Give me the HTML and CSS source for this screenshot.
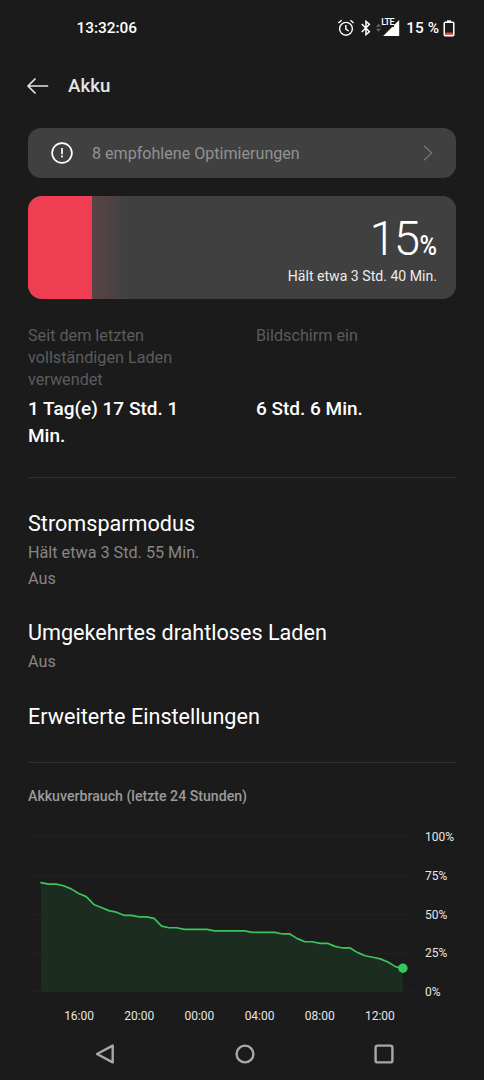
FILE: index.html
```html
<!DOCTYPE html>
<html lang="de">
<head>
    <meta charset="UTF-8">
    <meta name="viewport" content="width=device-width, initial-scale=1.0">
    <title>Akku</title>
    <link rel="stylesheet" href="styles.css">
</head>
<body>
    <div class="status-bar">
        <span class="clock">13:32:06</span>
        <div class="status-icons">
            <svg class="icon-alarm" width="18" height="18" viewBox="0 0 18 18" fill="none" stroke="#fff" stroke-width="1.4">
                <circle cx="9" cy="9.8" r="6.4"/>
                <path d="M8.8 6v4.2l2.9 1.8M1.4 4l3.2-2.7M16.6 4l-3.2-2.7"/>
            </svg>
            <svg class="icon-bluetooth" width="10" height="16" viewBox="0 0 10 16" fill="none" stroke="#fff" stroke-width="1.5">
                <path d="M.8 4l7.6 7.7L5 14.6V1.4l3.4 2.9L.8 12"/>
            </svg>
            <div class="signal">
                <svg width="24" height="18" viewBox="0 0 24 18">
                    <path d="M0 7.8L2.5 4.8 5 7.8zM0 9.8h5l-2.5 3z" fill="#666"/>
                    <path d="M23.2 1v16H7.2z" fill="#fff"/>
                </svg>
                <span class="lte">LTE</span>
            </div>
            <span class="status-percent">15 %</span>
            <svg class="icon-battery" width="12" height="17" viewBox="0 0 12 17">
                <path d="M4 .3h4v2H4z" fill="#fff"/>
                <rect x="1.25" y="2.25" width="9.5" height="13.5" rx="1" fill="none" stroke="#fff" stroke-width="1.5"/>
                <path d="M2.2 12.6h7.6v2.4H2.2z" fill="#e0573f"/>
            </svg>
        </div>
    </div>

    <header class="app-bar">
        <svg width="22" height="16" viewBox="0 0 22 16" fill="none" stroke="#e4e4e4" stroke-width="1.7" stroke-linecap="round" stroke-linejoin="round">
            <path d="M20.5 8H1M8 1L1 8l7 7"/>
        </svg>
        <h1>Akku</h1>
    </header>

    <main>
        <div class="tips">
            <svg width="22" height="22" viewBox="0 0 22 22" fill="none" stroke="#fff" stroke-width="1.7">
                <circle cx="11" cy="11" r="9.9"/>
                <path d="M11 6v6.2M11 13.6v2"/>
            </svg>
            <span>8 empfohlene Optimierungen</span>
            <svg class="chevron" width="10" height="16" viewBox="0 0 10 16" fill="none" stroke="#707070" stroke-width="1.5">
                <path d="M1 .7L8.6 8 1 15.3"/>
            </svg>
        </div>

        <div class="battery">
            <div class="battery-fill" style="width: 15%"></div>
            <div class="battery-info">
                <div class="level">15<span>%</span></div>
                <div class="remaining">Hält etwa 3 Std. 40 Min.</div>
            </div>
        </div>

        <div class="stats">
            <div class="stat">
                <div class="stat-label">Seit dem letzten vollständigen Laden verwendet</div>
                <div class="stat-value">1 Tag(e) 17 Std. 1 Min.</div>
            </div>
            <div class="stat">
                <div class="stat-label">Bildschirm ein</div>
                <div class="stat-value">6 Std. 6 Min.</div>
            </div>
        </div>

        <div class="options">
            <div class="option">
                <h2>Stromsparmodus</h2>
                <p>Hält etwa 3 Std. 55 Min.</p>
                <p>Aus</p>
            </div>
            <div class="option">
                <h2>Umgekehrtes drahtloses Laden</h2>
                <p>Aus</p>
            </div>
            <div class="option">
                <h2>Erweiterte Einstellungen</h2>
            </div>
        </div>

        <section class="usage">
            <h3>Akkuverbrauch (letzte 24 Stunden)</h3>
            <div class="chart">
                <svg id="plot" width="388" height="164" viewBox="0 0 388 164">
                    <path class="grid-lines" d="M0 4.5h386M0 43.5h386M0 82.5h386M0 121.5h386M0 159.5h386"/>
                    <polygon id="area" class="area"/>
                    <polyline id="line" class="line"/>
                    <circle id="dot" class="dot" r="4.7"/>
                </svg>
                <div class="y-axis">
                    <span>100%</span>
                    <span>75%</span>
                    <span>50%</span>
                    <span>25%</span>
                    <span>0%</span>
                </div>
            </div>
            <div class="x-axis">
                <span>16:00</span>
                <span>20:00</span>
                <span>00:00</span>
                <span>04:00</span>
                <span>08:00</span>
                <span>12:00</span>
            </div>
        </section>
    </main>

    <nav class="nav-bar">
        <svg width="20" height="20" viewBox="0 0 20 20"><path d="M17.7 1.6v16.8L2 10z"/></svg>
        <svg width="20" height="20" viewBox="0 0 20 20"><circle cx="10" cy="10" r="8.4"/></svg>
        <svg width="20" height="20" viewBox="0 0 20 20"><rect x="1.6" y="1.6" width="16.8" height="16.8" rx="2"/></svg>
    </nav>

    <script>
        // Battery level, one value per half hour
        const levels = [
            70, 69, 69, 68, 66, 63, 61, 56, 54, 52, 51, 49, 49, 48, 48, 47, 42,
            41, 41, 40, 40, 40, 40, 39, 39, 39, 39, 39, 38, 38, 38, 38, 37, 37,
            34, 32, 32, 31, 31, 29, 28, 28, 25, 23, 22, 21, 19, 16, 15
        ];
        const left = 13;
        const step = 7.54;
        const bottom = 159.5;

        const points = levels.map((level, i) => [left + i * step, bottom - level * 1.555]);
        const last = points[points.length - 1];
        const line = points.map(p => p.join(',')).join(' ');

        document.getElementById('line').setAttribute('points', line);
        document.getElementById('area').setAttribute('points', `${left},${bottom} ${line} ${last[0]},${bottom}`);
        document.getElementById('dot').setAttribute('cx', last[0]);
        document.getElementById('dot').setAttribute('cy', last[1]);
    </script>
</body>
</html>
```
FILE: styles.css
```css
* {
    margin: 0;
    padding: 0;
    box-sizing: border-box;
}

body {
    height: 1080px;
    background: #1b1b1b;
    color: #fff;
    font-family: Roboto, sans-serif;
    overflow: hidden;
    display: flex;
    flex-direction: column;
}

svg {
    display: block;
    flex-shrink: 0;
}

.status-bar {
    height: 56px;
    padding: 0 29px 0 76.5px;
    display: flex;
    align-items: center;
    justify-content: space-between;
    font-size: 15.4px;
    font-weight: 500;
}

.status-icons {
    display: flex;
    align-items: center;
}

.icon-bluetooth {
    margin-left: 6px;
}

.signal {
    position: relative;
    margin-left: 5px;
}

.lte {
    position: absolute;
    left: 5px;
    top: -1px;
    font-size: 9px;
    line-height: 9px;
    letter-spacing: -0.5px;
    background: #1b1b1b;
}

.status-percent {
    margin-left: 6px;
}

.icon-battery {
    margin-left: 4px;
}

.app-bar {
    height: 60px;
    padding-left: 27px;
    display: flex;
    align-items: center;
    gap: 19px;
}

h1 {
    font-size: 18.7px;
    font-weight: 500;
    color: #e4e4e4;
}

main {
    flex: 1;
    padding: 11.5px 28px 0;
}

.tips {
    height: 50.5px;
    padding: 0 23px 0 23px;
    border-radius: 13px;
    background: #404040;
    display: flex;
    align-items: center;
    font-size: 16.1px;
    color: #929292;
}

.tips span {
    margin: 1px 0 0 19px;
}

.chevron {
    margin-left: auto;
}

.battery {
    height: 103px;
    margin-top: 18px;
    border-radius: 14px;
    background: #404040;
    overflow: hidden;
    display: flex;
}

.battery-fill {
    background: #ef3e52;
}

.battery-info {
    flex: 1;
    padding: 19px 19px 0 0;
    background: linear-gradient(to right, #594446, #404040 38px);
    text-align: right;
}

.level {
    font-size: 47.5px;
    line-height: 48px;
    font-weight: 300;
    letter-spacing: -2px;
}

.level span {
    font-size: 27px;
    font-weight: 500;
    letter-spacing: 0;
    display: inline-block;
    transform: scaleX(0.88);
    transform-origin: right;
    margin-left: -1px;
}

.remaining {
    font-size: 14.1px;
    line-height: 20px;
    margin-top: -4px;
    color: #ececec;
}

.stats {
    height: 179px;
    padding-top: 26px;
    border-bottom: 1px solid #303030;
    display: grid;
    grid-template-columns: 1fr 1fr;
    column-gap: 28px;
}

.stat {
    display: flex;
    flex-direction: column;
    padding-right: 40px;
}

.stat-label {
    height: 70px;
    font-size: 16.2px;
    line-height: 22px;
    color: #5c5c5c;
}

.stat-value {
    font-size: 19px;
    line-height: 27px;
    font-weight: 500;
}

.options {
    height: 285px;
    padding-top: 31px;
    border-bottom: 1px solid #303030;
    display: flex;
    flex-direction: column;
    gap: 26.4px;
}

h2 {
    font-size: 21.6px;
    line-height: 30px;
    font-weight: 400;
}

.option p {
    font-size: 16.2px;
    line-height: 26px;
    color: #868686;
}

h2 + p {
    margin-top: 1px;
}

.usage {
    padding-top: 23px;
}

h3 {
    font-size: 14.15px;
    line-height: 20px;
    font-weight: 500;
    color: #9b9b9b;
}

.chart {
    display: flex;
    margin-top: 26px;
}

.grid-lines {
    stroke: #202020;
    fill: none;
}

.area {
    fill: #1d2c21;
}

.line {
    fill: none;
    stroke: #3cc45b;
    stroke-width: 1.7;
    stroke-linejoin: round;
    stroke-linecap: round;
}

.dot {
    fill: #34c759;
}

.y-axis {
    height: 171px;
    margin: -3px 0 -4px 9px;
    display: flex;
    flex-direction: column;
    justify-content: space-between;
    font-size: 12px;
    line-height: 16px;
    color: #e6e6e6;
}

.x-axis {
    width: 361px;
    margin: 12px 0 0 21px;
    display: grid;
    grid-template-columns: repeat(6, 1fr);
    text-align: center;
    font-size: 12px;
    line-height: 16px;
    color: #e6e6e6;
}

.nav-bar {
    height: 52px;
    padding: 0 90px 0 95px;
    display: flex;
    align-items: center;
    justify-content: space-between;
}

.nav-bar svg {
    fill: none;
    stroke: #a8a8a8;
    stroke-width: 2.4;
    stroke-linejoin: round;
}
```
